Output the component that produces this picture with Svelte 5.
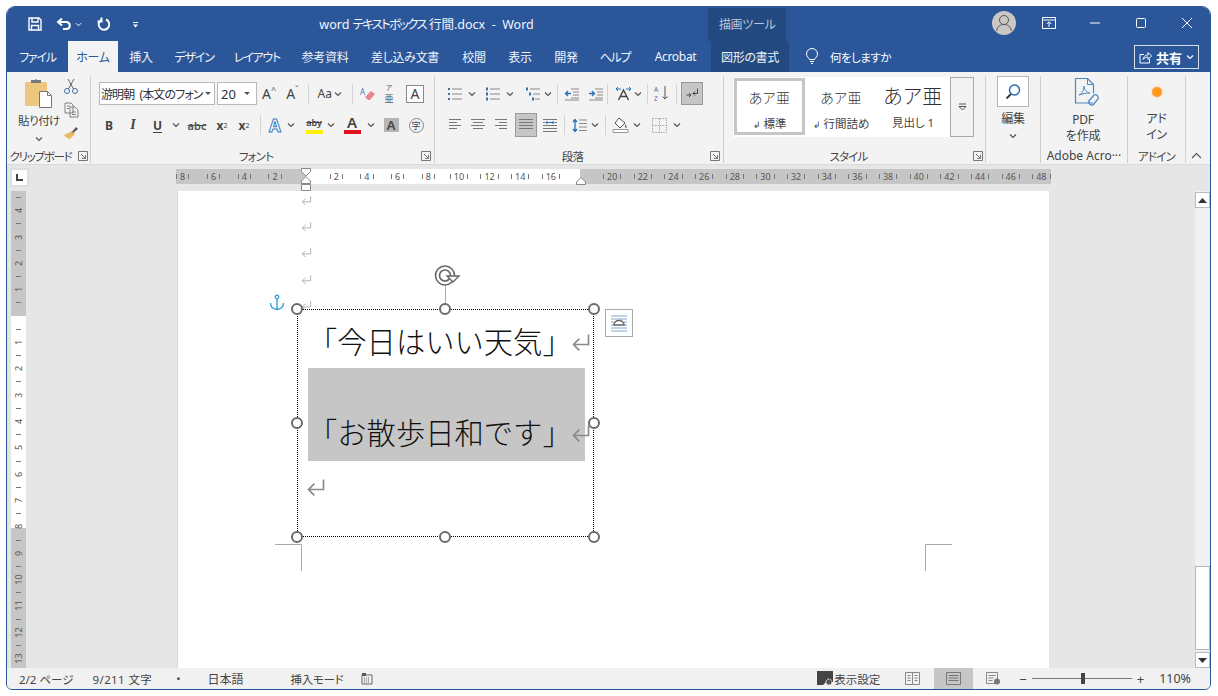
<script>
	const tabs = [
		{ label: 'ファイル', w: 61, kana: true },
		{ label: 'ホーム', w: 50, active: true },
		{ label: '挿入', w: 46 },
		{ label: 'デザイン', w: 60, kana: true },
		{ label: 'レイアウト', w: 66, kana: true },
		{ label: '参考資料', w: 70 },
		{ label: '差し込み文書', w: 90 },
		{ label: '校閲', w: 48 },
		{ label: '表示', w: 44 },
		{ label: '開発', w: 48 },
		{ label: 'ヘルプ', w: 50, kana: true },
		{ label: 'Acrobat', w: 71 }
	];

	const rulerCells = [];
	for (let n = -8; n <= 48; n += 2) {
		rulerCells.push(n === 0 || n === 18 ? '' : String(Math.abs(n)));
	}

	const vCells = [];
	for (let i = -9; i <= 27; i++) {
		if (i === 0) vCells.push({ kind: 'blank' });
		else if (i % 2 === 0) vCells.push({ kind: 'num', text: String(Math.abs(i / 2)) });
		else vCells.push({ kind: 'tick' });
	}

	const paragraphMarks = [0, 1, 2, 3, 4];
</script>

{#snippet chev()}
	<span class="cell w12">
		<svg width="8" height="6" viewBox="0 0 8 6"><path d="M1 1.5 4 4.5 7 1.5" fill="none" stroke="#555" stroke-width="1.2" /></svg>
	</span>
{/snippet}

{#snippet launcher()}
	<svg class="launcher" width="10" height="10" viewBox="0 0 10 10">
		<path d="M.5 9.5V.5h9v9z M3 3l4.5 4.5 M4 7.5h3.5V4" fill="none" stroke="#777" />
	</svg>
{/snippet}

{#snippet mark(big)}
	<svg class={big ? 'mark big' : 'mark'} viewBox="0 0 12 12">
		<path d="M10.5 1.5V7.5H1.5 M5 4 1.5 7.5 5 11" fill="none" stroke="currentColor" stroke-width="1" />
	</svg>
{/snippet}

{#snippet lines(a, b, c, d)}
	<svg width="16" height="14" viewBox="0 0 16 14">
		<path d="M{a} 1.5H{b} M{c} 4.5H{d} M{a} 7.5H{b} M{c} 10.5H{d}" stroke="#777" fill="none" />
	</svg>
{/snippet}

<div class="window">
	<header class="titlebar">
		<div class="qat">
			<span class="q q-save">
				<svg width="14" height="14" viewBox="0 0 14 14"><path d="M1 1h10l2 2v10H1z M4 1v4h6V1 M3.500 13V8.500h7V13" fill="none" stroke="#fff" stroke-width="1.400" /></svg>
			</span>
			<span class="q q-undo">
				<svg width="16" height="14" viewBox="0 0 16 14"><path d="M6 1.500 2 5l4 3.500 M2.500 5H10c5 0 5 7 0 7H7" fill="none" stroke="#fff" stroke-width="2" /></svg>
			</span>
			<span class="q q-chev">
				<svg width="7" height="5" viewBox="0 0 8 6"><path d="M1 1.500 4 4.500 7 1.500" fill="none" stroke="#fff" stroke-width="1.200" /></svg>
			</span>
			<span class="q q-redo">
				<svg width="14" height="15" viewBox="0 0 14 15"><path d="M9 2.500A5.300 5.300 0 1 1 4 3 M4.500 .5V4.500H.5" fill="none" stroke="#fff" stroke-width="2" /></svg>
			</span>
			<span class="q q-custom">
				<svg width="7" height="7" viewBox="0 0 7 7"><path d="M1 1.500h5" stroke="#fff" /><path d="M1 3.500h5L3.500 6.500z" fill="#fff" /></svg>
			</span>
		</div>
		<div class="doc-title">word <span class="title-kana">テキストボックス</span> 行間.docx&nbsp; - &nbsp;Word</div>
		<div class="context-head">描画ツール</div>
		<div class="window-controls">
			<span class="avatar">
				<svg width="24" height="24" viewBox="0 0 24 24"><circle cx="12" cy="9" r="4.500" fill="none" stroke="#555" /><path d="M4.500 20c1-5 4-6.500 7.500-6.500s6.500 1.500 7.500 6.500" fill="none" stroke="#555" /></svg>
			</span>
			<span class="ctl first">
				<svg width="14" height="12" viewBox="0 0 14 12"><path d="M.5 .5h13v11H.5z M.5 3h13" fill="none" stroke="#fff" /><path d="M7 10V5 M4.800 7 7 4.800 9.200 7" fill="none" stroke="#fff" /></svg>
			</span>
			<span class="ctl"><svg width="12" height="12" viewBox="0 0 12 12"><path d="M1 6h10" stroke="#fff" /></svg></span>
			<span class="ctl"><svg width="12" height="12" viewBox="0 0 12 12"><rect x="1.500" y="1.500" width="9" height="9" rx="1" fill="none" stroke="#fff" /></svg></span>
			<span class="ctl"><svg width="12" height="12" viewBox="0 0 12 12"><path d="M1 1l10 10M11 1 1 11" stroke="#fff" /></svg></span>
		</div>
	</header>

	<nav class="tabbar">
		<div class="tabs">
			{#each tabs as t}
				<span class="tab" class:active={t.active} class:kana={t.kana} style="width: {t.w}px">{t.label}</span>
			{/each}
			<span class="tab context-tab">図形の書式</span>
			<span class="tell">
				<svg width="14" height="17" viewBox="0 0 14 17"><path d="M4.500 11.500C3.500 9.500 1.500 8.500 1.500 6a5.500 5.500 0 0 1 11 0c0 2.500-2 3.500-3 5.500z M5 13.500h4 M6 15.500h2" fill="none" stroke="#fff" /></svg>
				<span>何をしますか</span>
			</span>
		</div>
		<span class="share">
			<svg width="13" height="13" viewBox="0 0 13 13"><path d="M5 3.500H1v8.500h9.500V8 M4 8.500C4.500 5 7 4 9 4V1.500L12.500 5 9 8.500V6C7 6 5 7 4 8.500z" fill="none" stroke="#fff" /></svg>
			<b>共有</b>
			<svg width="8" height="6" viewBox="0 0 8 6"><path d="M1 1.500 4 4.500 7 1.500" fill="none" stroke="#fff" stroke-width="1.100" /></svg>
		</span>
	</nav>

	<section class="ribbon">
		<div class="group g-clip">
			<div class="body clip-body">
				<div class="paste">
					<svg width="32" height="32" viewBox="0 0 32 32">
						<rect x="2" y="5" width="22" height="24" rx="1" fill="#eec77f" />
						<path d="M8 6V3h3.500a2 2 0 0 1 3 0H18v3z" fill="#777" />
						<path d="M16.500 14.500h8l4 4v12h-12z" fill="#fff" stroke="#777" />
						<path d="M24.500 14.500v4h4" fill="none" stroke="#777" />
					</svg>
					<span class="paste-label">貼り付け</span>
					<svg width="8" height="6" viewBox="0 0 8 6"><path d="M1 1.500 4 4.500 7 1.500" fill="none" stroke="#555" stroke-width="1.200" /></svg>
				</div>
				<div class="clip-tools">
					<svg width="16" height="17" viewBox="0 0 16 17"><path d="M5 1l5.500 10 M11 1 5.500 11" stroke="#666" fill="none" /><circle cx="4" cy="13" r="2.500" fill="none" stroke="#3c6ea5" /><circle cx="12" cy="13" r="2.500" fill="none" stroke="#3c6ea5" /></svg>
					<svg width="15" height="16" viewBox="0 0 15 16"><path d="M1 1h6l2 2v8H1z M6 5h5l3 3v7H6z M3 4h3M3 6.500h2M8 10h4M8 12.500h4" fill="#f3f3f3" stroke="#777" stroke-width=".9" /></svg>
					<svg width="16" height="15" viewBox="0 0 16 15"><path d="M9 6l3 3-5 5c-2-.5-5-2-6-4z" fill="#e7b865" /><path d="M9 7l4-5 2 2-5 4z" fill="#555" /></svg>
				</div>
			</div>
			<div class="group-label clip-label"><span>クリップボード</span>{@render launcher()}</div>
		</div>

		<div class="group g-font">
			<div class="body">
				<div class="row row1 font-r1">
					<span class="combo font-name">游明朝 (本文のフォン<i class="tri"></i></span>
					<span class="combo font-size">20<i class="tri"></i></span>
					<span class="cell w24 ch">A<sup>^</sup></span>
					<span class="cell w23 ch">A<sup>ˇ</sup></span>
					<span class="sep"></span>
					<span class="cell w35 case"><span class="aa">Aa</span><svg width="8" height="6" viewBox="0 0 8 6"><path d="M1 1.500 4 4.500 7 1.500" fill="none" stroke="#555" stroke-width="1.200" /></svg></span>
					<span class="sep"></span>
					<span class="cell w20">
						<svg width="17" height="16" viewBox="0 0 17 16"><path d="M9 14l-3-3 6-6 4 3-5 6z" fill="#e8848f" /><text x="1" y="9" font-size="8" fill="#4a7ab5" font-family="Noto Sans">A</text></svg>
					</span>
					<span class="cell w24 ruby"><small>ア</small><span>亜</span></span>
					<span class="cell w18 ml5 boxed">A</span>
				</div>
				<div class="row row2 font-r2">
					<span class="cell w24 tb"><b>B</b></span>
					<span class="cell w24 tb italic">I</span>
					<span class="cell w25 tb under"><b>U</b></span>
					{@render chev()}
					<span class="cell w30 tb strike">abc</span>
					<span class="cell w20 tb"><b>x</b><sub>2</sub></span>
					<span class="cell w24 tb"><b>x</b><sup class="pow">2</sup></span>
					<span class="sep"></span>
					<span class="cell w20 effect">A</span>
					{@render chev()}
					<span class="cell w22 ml6 colored"><span class="hl">aby</span><i class="bar yellow"></i></span>
					{@render chev()}
					<span class="cell w20 ml5 colored"><span class="fc">A</span><i class="bar red"></i></span>
					<span class="cell w12 ml3"><svg width="8" height="6" viewBox="0 0 8 6"><path d="M1 1.500 4 4.500 7 1.500" fill="none" stroke="#555" stroke-width="1.200" /></svg></span>
					<span class="cell w20 ml4 shaded"><span>A</span></span>
					<span class="cell w20 ml5"><span class="enclosed">字</span></span>
				</div>
			</div>
			<div class="group-label"><span>フォント</span>{@render launcher()}</div>
		</div>

		<div class="group g-para">
			<div class="body">
				<div class="row row1 para-r1">
					<span class="cell w20 ml10">
						<svg width="16" height="14" viewBox="0 0 16 14"><path d="M5 2h10M5 7h10M5 12h10" stroke="#888" /><path d="M1 1h2v2H1zM1 6h2v2H1zM1 11h2v2H1z" fill="#3c6ea5" /></svg>
					</span>
					<span class="cell w12 ml1"><svg width="8" height="6" viewBox="0 0 8 6"><path d="M1 1.500 4 4.500 7 1.500" fill="none" stroke="#555" stroke-width="1.200" /></svg></span>
					<span class="cell w20 ml5">
						<svg width="16" height="14" viewBox="0 0 16 14"><path d="M5 2h10M5 7h10M5 12h10" stroke="#888" /><path d="M1 .5h2v3H1zM1 5.500h2v3H1zM1 10.500h2v3H1z" fill="#3c6ea5" /></svg>
					</span>
					<span class="cell w12 ml1"><svg width="8" height="6" viewBox="0 0 8 6"><path d="M1 1.500 4 4.500 7 1.500" fill="none" stroke="#555" stroke-width="1.200" /></svg></span>
					<span class="cell w18 ml8">
						<svg width="16" height="14" viewBox="0 0 16 14"><path d="M5 2h10M8 7h7M10 12h5" stroke="#888" /><path d="M1 .5h2v3H1zM4 5.500h2v3H4zM7 10.500h2v3H7z" fill="#3c6ea5" /></svg>
					</span>
					{@render chev()}
					<span class="sep ml3"></span>
					<span class="cell w20">
						<svg width="16" height="14" viewBox="0 0 16 14"><path d="M7 2h8M9 5h6M9 8h6M7 11h8M1 13h14" stroke="#888" /><path d="M7 6.500H1.500 M4 4 1.500 6.500 4 9" stroke="#2a6fb5" fill="none" stroke-width="1.300" /></svg>
					</span>
					<span class="cell w20 ml4">
						<svg width="16" height="14" viewBox="0 0 16 14"><path d="M7 2h8M9 5h6M9 8h6M7 11h8M1 13h14" stroke="#888" /><path d="M1 6.500H6.500 M4 4 6.500 6.500 4 9" stroke="#2a6fb5" fill="none" stroke-width="1.300" /></svg>
					</span>
					<span class="sep ml1"></span>
					<span class="cell w18 ml2">
						<svg width="17" height="15" viewBox="0 0 17 15"><path d="M3.500 14 8.500 4l5 10 M5.500 10.500h6" stroke="#444" fill="none" stroke-width="1.400" /><path d="M1 3h5M3 1 1 3l2 2 M16 3h-5M14 1l2 2-2 2" stroke="#2a6fb5" fill="none" /></svg>
					</span>
					{@render chev()}
					<span class="sep ml3"></span>
					<span class="cell w20">
						<svg width="16" height="17" viewBox="0 0 16 17"><text x="0" y="7" font-size="6.500" fill="#3c6ea5" font-family="Noto Sans">A</text><text x="0" y="16" font-size="6.500" fill="#8a5fb0" font-family="Noto Sans">Z</text><path d="M11 1v13M8.500 11.500 11 14l2.500-2.500" stroke="#555" fill="none" /></svg>
					</span>
					<span class="sep"></span>
					<span class="cell w22 pressed">
						<svg width="15" height="13" viewBox="0 0 15 13"><path d="M12.500 1.500v5H8 M10 4.500 8 6.500l2 2 M1.500 8h4 M4 6 6 8 4 10" stroke="#444" fill="none" /></svg>
					</span>
				</div>
				<div class="row row2 para-r2">
					<span class="cell w20 ml9">{@render lines(3, 15, 3, 11)}</span>
					<span class="cell w20 ml4">{@render lines(1, 15, 3, 13)}</span>
					<span class="cell w20 ml4">{@render lines(1, 13, 5, 13)}</span>
					<span class="cell w22 ml3 pressed">{@render lines(1, 15, 1, 15)}</span>
					<span class="cell w20 ml3">
						<svg width="16" height="15" viewBox="0 0 16 15"><path d="M1 1.500h14M1 4.500h2M13 4.500h2M1 7.500h14M1 10.500h14M1 13.500h14" stroke="#777" /><path d="M4 4.500h8M5.500 3 4 4.500 5.500 6M10.500 3 12 4.500 10.500 6" stroke="#2a6fb5" fill="none" /></svg>
					</span>
					<span class="sep"></span>
					<span class="cell w19 ml1">
						<svg width="15" height="15" viewBox="0 0 15 15"><path d="M3 2v11M1 4l2-2.500L5 4M1 11l2 2.500L5 11" stroke="#2a6fb5" fill="none" stroke-width="1.300" /><path d="M7 2h8M7 5.500h8M7 9h8M7 12.500h8" stroke="#888" /></svg>
					</span>
					{@render chev()}
					<span class="sep ml4"></span>
					<span class="cell w20">
						<svg width="17" height="16" viewBox="0 0 17 16"><path d="M7 1l6 5-5 5-5-5z" fill="#fff" stroke="#555" /><path d="M13 7c2 2 2 4 1 4s-1-2-1-4z" fill="#2a6fb5" /><path d="M1 12.500h15v3H1z" fill="#fff" stroke="#999" /></svg>
					</span>
					<span class="cell w12 ml1"><svg width="8" height="6" viewBox="0 0 8 6"><path d="M1 1.500 4 4.500 7 1.500" fill="none" stroke="#555" stroke-width="1.200" /></svg></span>
					<span class="cell w20 ml6">
						<svg width="15" height="15" viewBox="0 0 15 15"><path d="M.5 .5h14v14H.5z M7.500 .5v14 M.5 7.500h14" fill="none" stroke="#aaa" stroke-dasharray="1.500 1" /></svg>
					</span>
					<span class="cell w12 ml2"><svg width="8" height="6" viewBox="0 0 8 6"><path d="M1 1.500 4 4.500 7 1.500" fill="none" stroke="#555" stroke-width="1.200" /></svg></span>
				</div>
			</div>
			<div class="group-label"><span>段落</span>{@render launcher()}</div>
		</div>

		<div class="group g-style">
			<div class="body">
				<div class="gallery">
					<div class="style current"><span class="sample">あア亜</span><span class="sname"><i>↲</i> 標準</span></div>
					<div class="style"><span class="sample">あア亜</span><span class="sname"><i>↲</i> 行間詰め</span></div>
					<div class="style"><span class="sample large">あア亜</span><span class="sname">見出し 1</span></div>
					<div class="gallery-more">
						<svg width="9" height="8" viewBox="0 0 9 8"><path d="M1 1h7" stroke="#555" /><path d="M1 3.500h7L4.500 7z" fill="none" stroke="#555" /></svg>
					</div>
				</div>
			</div>
			<div class="group-label"><span>スタイル</span>{@render launcher()}</div>
		</div>

		<div class="group g-edit">
			<div class="big-col">
				<span class="find">
					<svg width="18" height="18" viewBox="0 0 18 18"><circle cx="10.500" cy="7" r="5" fill="none" stroke="#2a6fb5" stroke-width="1.500" /><path d="M7 11 2.500 15.500" stroke="#333" stroke-width="1.800" /></svg>
				</span>
				<span class="big-text edit-text">編集</span>
				<svg width="8" height="6" viewBox="0 0 8 6"><path d="M1 1.500 4 4.500 7 1.500" fill="none" stroke="#555" stroke-width="1.200" /></svg>
			</div>
		</div>

		<div class="group g-pdf">
			<div class="big-col">
				<svg class="pdf-icon" width="28" height="31" viewBox="0 0 28 31">
					<path d="M2.500 1.500h12l6 6v9 M20 26H2.500V1.500" fill="none" stroke="#4a86c5" stroke-width="1.200" />
					<path d="M14.500 1.500v6h6" fill="none" stroke="#4a86c5" />
					<path d="M6 18c3-1 5-5 5-9 0 3 2 6 6 7-3 0-7 .5-11 2z" fill="none" stroke="#4a86c5" />
					<path d="M15 25l6-7a3 3 0 0 1 4 4l-5 6a3 3 0 0 1-4-3" fill="none" stroke="#4a86c5" stroke-width="1.300" />
				</svg>
				<span class="big-text pdf-text">PDF<br />を作成</span>
			</div>
			<div class="group-label wide acro"><span>Adobe Acro···</span></div>
		</div>

		<div class="group g-addin">
			<div class="big-col">
				<span class="dot"></span>
				<span class="big-text addin-text">アド<br />イン</span>
			</div>
			<div class="group-label wide"><span>アドイン</span></div>
		</div>

		<div class="collapse">
			<svg width="11" height="7" viewBox="0 0 11 7"><path d="M1 6 5.500 1.500 10 6" fill="none" stroke="#555" stroke-width="1.100" /></svg>
		</div>
	</section>

	<section class="workspace">
		<div class="ruler-row">
			<span class="tabstop"><svg width="9" height="9" viewBox="0 0 9 9"><path d="M2 1v6h6" fill="none" stroke="#444" stroke-width="2" /></svg></span>
			<div class="hruler">
				<div class="hcells">
					{#each rulerCells as text}
						<span class="hcell">
							{#if text}<i class="tick"></i><span>{text}</span><i class="tick"></i>{/if}
						</span>
					{/each}
				</div>
				<svg class="indent first-line" width="10" height="9" viewBox="0 0 10 9"><path d="M.5 .5h9v3L5 8 .5 3.500z" fill="#fff" stroke="#888" /></svg>
				<svg class="indent hanging" width="10" height="8" viewBox="0 0 10 8"><path d="M5 .5 9.500 5v2.500h-9V5z" fill="#fff" stroke="#888" /></svg>
				<svg class="indent left-box" width="10" height="7" viewBox="0 0 10 7"><path d="M.5 .5h9v6h-9z" fill="#fff" stroke="#888" /></svg>
				<svg class="indent right-ind" width="10" height="8" viewBox="0 0 10 8"><path d="M5 .5 9.500 5v2.500h-9V5z" fill="#fff" stroke="#888" /></svg>
			</div>
		</div>

		<div class="doc-area">
			<div class="left-pane">
				<div class="vruler">
					{#each vCells as c}
						<span class="vcell">
							{#if c.kind === 'num'}<span class="vnum">{c.text}</span>{:else if c.kind === 'tick'}<i class="vtick"></i>{/if}
						</span>
					{/each}
				</div>
			</div>

			<div class="page">
				<div class="para-marks">
					{#each paragraphMarks as p (p)}
						<div class="para-line">{@render mark(false)}</div>
					{/each}
				</div>

				<svg class="crop crop-l" width="27" height="27" viewBox="0 0 27 27"><path d="M0 .5h26.500V27" fill="none" stroke="#aaa" /></svg>
				<svg class="crop crop-r" width="27" height="27" viewBox="0 0 27 27"><path d="M27 .5H.5V27" fill="none" stroke="#aaa" /></svg>

				<svg class="anchor" width="16" height="17" viewBox="0 0 16 17"><circle cx="8" cy="3" r="1.800" fill="none" stroke="#2e9bd6" stroke-width="1.200" /><path d="M8 5v10.500 M1.500 9c0 4 3 6 6.500 6.500 3.500-.5 6.500-2.500 6.500-6.500" fill="none" stroke="#2e9bd6" stroke-width="1.300" /></svg>

				<div class="rotate-stem"></div>
				<svg class="rotate" width="27" height="24" viewBox="0 0 27 24">
					<circle cx="11" cy="11.500" r="9.500" fill="none" stroke="#666" stroke-width="1.600" />
					<circle cx="11" cy="11.500" r="5.500" fill="none" stroke="#666" stroke-width="1.600" />
					<path d="M13 12h12l-6 6z" fill="#fff" stroke="#666" stroke-width="1.400" />
				</svg>

				<div class="shape">
					<div class="shape-line">「今日はいい天気」{@render mark(true)}</div>
					<div class="selected">
						<div class="shape-line">「お散歩日和です」{@render mark(true)}</div>
					</div>
					<div class="last-line">{@render mark(true)}</div>
					<i class="h tl"></i><i class="h tc"></i><i class="h tr"></i>
					<i class="h ml"></i><i class="h mr"></i>
					<i class="h bl"></i><i class="h bc"></i><i class="h br"></i>
				</div>

				<span class="layout-options">
					<svg width="20" height="20" viewBox="0 0 20 20">
						<path d="M2 3h16M2 6h16M2 15h16M2 18h16M2 9h3M15 9h3M2 12h3M15 12h3" stroke="#7fa6cc" />
						<path d="M5 12c0-6 10-6 10 0z" fill="#fff" stroke="#666" stroke-width="1.500" />
					</svg>
				</span>
			</div>

			<div class="right-pane"></div>

			<div class="scrollbar">
				<span class="sb-btn"><svg width="9" height="5" viewBox="0 0 9 5"><path d="M4.500 0 9 5H0z" fill="#333" /></svg></span>
				<span class="sb-track"><span class="sb-thumb"></span></span>
				<span class="sb-btn"><svg width="9" height="5" viewBox="0 0 9 5"><path d="M0 0h9L4.500 5z" fill="#333" /></svg></span>
			</div>
		</div>
	</section>

	<footer class="statusbar">
		<span class="st page-count">2/2 ページ</span>
		<span class="st words">9/211 文字</span>
		<span class="st bullet">•</span>
		<span class="st lang">日本語</span>
		<span class="st mode">挿入モード</span>
		<svg class="macro" width="12" height="13" viewBox="0 0 12 13"><path d="M1 3h10v9H1z" fill="none" stroke="#666" /><path d="M1 1h4v3H1z" fill="#555" /><path d="M3 6h6M3 8h6M3 10h6" stroke="#666" stroke-dasharray="1 1" /></svg>
		<div class="st-right">
			<span class="display">
				<svg width="17" height="15" viewBox="0 0 17 15"><path d="M0 0h16v11H9l-3 3H0z" fill="#444" /><circle cx="12" cy="11" r="3" fill="#555" stroke="#f1f1f1" stroke-dasharray="2 1" /></svg>
				表示設定
			</span>
			<svg class="view-read" width="15" height="13" viewBox="0 0 15 13"><path d="M.5 .5h14v12H.5z M7.500 .5v12 M2.500 3.500h3M2.500 6h3M2.500 8.500h3M9.500 3.500h3M9.500 6h3M9.500 8.500h3" fill="none" stroke="#888" /></svg>
			<span class="view-print"><svg width="15" height="13" viewBox="0 0 15 13"><path d="M.5 .5h14v12H.5z M2.500 3.500h10M2.500 6h10M2.500 8.500h10" fill="none" stroke="#777" /></svg></span>
			<svg class="view-web" width="15" height="13" viewBox="0 0 15 13"><path d="M.5 .5h11v11H.5z M2.500 3.500h7M2.500 6h5M2.500 8.500h4" fill="none" stroke="#888" /><circle cx="11" cy="9.500" r="3" fill="#777" /></svg>
			<span class="zoom-minus">−</span>
			<span class="slider"><i class="slider-thumb"></i></span>
			<span class="zoom-plus">+</span>
			<span class="zoom-val">110%</span>
		</div>
	</footer>
</div>

<style>
	:global(body) {
		margin: 0;
		background: #fff;
	}

	.window {
		box-sizing: border-box;
		width: 1205px;
		height: 684px;
		margin: 6px 0 0 6px;
		border: 1px solid #2b579a;
		border-radius: 9px 9px 6px 6px;
		overflow: hidden;
		display: flex;
		flex-direction: column;
		font-family: "Noto Sans", "Noto Sans CJK JP", sans-serif;
		font-feature-settings: "palt";
		color: #444;
		background: #f3f3f3;
	}

	i {
		font-style: normal;
	}

	/* title bar */
	.titlebar {
		height: 34px;
		flex: none;
		display: flex;
		background: #2b579a;
		color: #fff;
	}

	.qat {
		width: 137px;
		display: flex;
		align-items: center;
	}

	.q {
		display: flex;
		align-items: center;
	}

	.q-save { margin-left: 21px; }
	.q-undo { margin-left: 14px; }
	.q-chev { margin-left: 3px; }
	.q-redo { margin-left: 15px; }
	.q-custom { margin-left: 21px; }

	.doc-title {
		width: 567px;
		line-height: 36px;
		font-size: 12.500px;
		padding-left: 176px;
		box-sizing: border-box;
		white-space: nowrap;
		color: #f2f5fa;
	}

	.title-kana {
		letter-spacing: -1.800px;
	}

	.context-head {
		width: 78px;
		margin-top: 1px;
		background: #234a80;
		color: #b9c7dc;
		font-size: 12px;
		line-height: 33px;
		text-align: center;
		letter-spacing: -0.3px;
	}

	.window-controls {
		flex: 1;
		display: flex;
		align-items: center;
		padding-left: 206px;
		padding-bottom: 2px;
	}

	.avatar {
		width: 24px;
		height: 24px;
		border-radius: 50%;
		background: #c9c6c3;
		display: block;
	}

	.avatar svg {
		display: block;
	}

	.ctl {
		width: 46px;
		display: flex;
		justify-content: center;
	}

	.ctl.first {
		margin-left: 10px;
	}

	/* tabs */
	.tabbar {
		height: 31px;
		flex: none;
		display: flex;
		background: #2b579a;
		color: #fff;
		font-size: 12px;
	}

	.tabs {
		display: flex;
		flex: 1;
		align-items: stretch;
	}

	.tab {
		display: flex;
		align-items: center;
		justify-content: center;
		white-space: nowrap;
		color: #f0f4fa;
		box-sizing: border-box;
		letter-spacing: -0.3px;
	}

	.tab.kana {
		letter-spacing: -1.2px;
	}

	.tab.active {
		background: #f3f3f3;
		color: #2b579a;
	}

	.context-tab {
		width: 78px;
		background: #234a80;
	}

	.tell {
		display: flex;
		align-items: center;
		gap: 11px;
		margin-left: 16px;
		font-size: 11.500px;
		letter-spacing: -0.5px;
	}

	.share {
		box-sizing: border-box;
		width: 65px;
		height: 24px;
		margin: 4px 11px 0 0;
		border: 1px solid #d5deeb;
		display: flex;
		align-items: center;
		justify-content: center;
		gap: 4px;
		font-size: 13px;
	}

	/* ribbon */
	.ribbon {
		height: 93px;
		flex: none;
		display: flex;
		align-items: flex-start;
		background: #f3f3f3;
		border-bottom: 1px solid #dadada;
		box-sizing: border-box;
		font-size: 12px;
	}

	.group {
		box-sizing: border-box;
		height: 87px;
		margin-top: 4px;
		border-right: 1px solid #cfcfcf;
		display: flex;
		flex-direction: column;
	}

	.g-clip { width: 84px; }
	.g-font { width: 344px; }
	.g-para { width: 289px; }
	.g-style { width: 262px; }
	.g-edit { width: 55px; }
	.g-pdf { width: 87px; }
	.g-addin { width: 58px; }

	.body {
		flex: 1;
		min-height: 0;
	}

	.group-label {
		height: 16px;
		flex: none;
		display: flex;
		align-items: center;
		font-size: 11.500px;
		white-space: nowrap;
		letter-spacing: -0.8px;
		padding-top: 1px;
		box-sizing: border-box;
	}

	.group-label span {
		flex: 1;
		text-align: center;
	}

	.group-label.wide {
		margin-top: auto;
	}

	.clip-label {
		letter-spacing: -1.300px;
	}

	.clip-label span {
		padding-right: 4px;
	}

	.acro {
		letter-spacing: 0;
		font-size: 12px;
		overflow: hidden;
	}

	.launcher {
		flex: none;
		margin: 0 2px 0 0;
	}

	.g-font .launcher,
	.g-para .launcher {
		margin-right: 3px;
	}

	.clip-body {
		display: flex;
	}

	.paste {
		width: 54px;
		display: flex;
		flex-direction: column;
		align-items: center;
		padding-left: 10px;
		box-sizing: border-box;
		padding-top: 1px;
	}

	.paste-label {
		margin: 3px 0 7px;
		font-size: 11.500px;
		letter-spacing: -0.5px;
		line-height: 17px;
		white-space: nowrap;
	}

	.clip-tools {
		width: 20px;
		display: flex;
		flex-direction: column;
		align-items: center;
		gap: 7px;
		padding-top: 2px;
	}

	.row {
		display: flex;
		align-items: center;
	}

	.row1 {
		height: 23px;
		margin-top: 6px;
	}

	.row2 {
		height: 24px;
		margin-top: 8px;
	}

	.font-r1 { padding-left: 8px; }
	.font-r2 { padding-left: 6px; }

	.cell {
		flex: none;
		height: 23px;
		display: flex;
		align-items: center;
		justify-content: center;
		gap: 3px;
		box-sizing: border-box;
	}

	.w12 { width: 12px; }
	.w18 { width: 18px; }
	.w19 { width: 19px; }
	.w20 { width: 20px; }
	.w22 { width: 22px; }
	.w23 { width: 23px; }
	.w24 { width: 24px; }
	.w25 { width: 25px; }
	.w30 { width: 30px; }
	.w35 { width: 35px; }
	.ml1 { margin-left: 1px; }
	.ml2 { margin-left: 2px; }
	.ml3 { margin-left: 3px; }
	.ml4 { margin-left: 4px; }
	.ml5 { margin-left: 5px; }
	.ml6 { margin-left: 6px; }
	.ml8 { margin-left: 8px; }
	.ml9 { margin-left: 9px; }
	.ml10 { margin-left: 10px; }

	.sep {
		flex: none;
		width: 1px;
		height: 20px;
		margin: 0 4px;
		background: #d4d4d4;
	}

	.sep.ml1 { margin-left: 1px; }
	.sep.ml3 { margin-left: 3px; }
	.sep.ml4 { margin-left: 4px; }

	.combo {
		box-sizing: border-box;
		height: 23px;
		background: #fff;
		border: 1px solid #b9b9b9;
		display: flex;
		align-items: center;
		font-size: 12px;
		white-space: pre;
		padding-left: 1px;
		position: relative;
		letter-spacing: -0.900px;
		word-spacing: 3px;
		flex: none;
		color: #333;
	}

	.font-name {
		width: 116px;
	}

	.font-size {
		width: 40px;
		margin-left: 2px;
		padding-left: 3px;
		font-size: 13px;
		letter-spacing: 0;
	}

	.tri {
		position: absolute;
		right: 3px;
		top: 9px;
		border: 3px solid transparent;
		border-top: 3px solid #555;
	}

	.font-size .tri {
		right: 6px;
	}

	.ch {
		font-size: 14px;
		gap: 0;
	}

	.ch sup {
		font-size: 9px;
		color: #555;
		line-height: 1;
		margin-bottom: 8px;
	}

	.case {
		justify-content: flex-end;
		padding-right: 6px;
		gap: 2px;
	}

	.aa {
		font-size: 12px;
	}

	.ruby {
		flex-direction: column;
		gap: 0;
		color: #555;
		font-size: 9px;
		line-height: normal;
	}

	.ruby small {
		font-size: 6.500px;
	}

	.boxed {
		height: 18px;
		border: 1px solid #888;
		background: #fdfdfd;
		font-size: 14px;
		color: #444;
	}

	.tb {
		font-size: 12px;
		color: #444;
		gap: 0;
	}

	.italic {
		font-family: "Liberation Serif", serif;
		font-style: italic;
		font-weight: 700;
		font-size: 14px;
	}

	.under b {
		text-decoration: underline;
		text-underline-offset: 2px;
	}

	.strike {
		text-decoration: line-through;
		font-size: 11px;
		font-weight: 600;
		color: #555;
	}

	.tb sub,
	.tb .pow {
		font-size: 7px;
		line-height: 1;
	}

	.effect {
		font-size: 17px;
		color: #fff;
		-webkit-text-stroke: 1px #3a7cc0;
		font-weight: 700;
	}

	.colored {
		flex-direction: column;
		gap: 0;
		line-height: 13px;
	}

	.hl {
		font-size: 9px;
		font-weight: 600;
		text-decoration: line-through;
	}

	.fc {
		font-size: 15px;
		font-weight: 600;
	}

	.bar {
		display: block;
		width: 17px;
		height: 4px;
		margin-top: 1px;
	}

	.yellow { background: #fff200; }
	.red { background: #e2101e; }

	.shaded span {
		display: block;
		width: 15px;
		line-height: 14px;
		text-align: center;
		background: #b5b5b5;
		font-size: 13px;
		font-weight: 600;
		color: #444;
	}

	.enclosed {
		box-sizing: border-box;
		width: 15px;
		height: 15px;
		border: 1px solid #888;
		border-radius: 50%;
		font-size: 9px;
		text-align: center;
		line-height: 13px;
	}

	.pressed {
		background: #c6c6c6;
		border: 1px solid #9a9a9a;
	}

	.para-r2 .pressed {
		height: 24px;
	}

	/* styles gallery */
	.gallery {
		display: flex;
		margin: 1px 0 0 9px;
		width: 241px;
		height: 60px;
		box-sizing: border-box;
		background: #fff;
		padding-top: 1px;
		padding-bottom: 2px;
	}

	.style {
		box-sizing: border-box;
		width: 72px;
		display: flex;
		flex-direction: column;
		align-items: center;
		padding-top: 7px;
	}

	.current {
		width: 71px;
		margin-left: 1px;
		border: 3px solid #c6c6c6;
		padding-top: 4px;
	}

	.sample {
		height: 26px;
		font-size: 14px;
		line-height: 26px;
		font-weight: 300;
		color: #333;
		letter-spacing: 0.4px;
		white-space: nowrap;
	}

	.large {
		font-size: 20px;
		margin-top: -1px;
	}

	.sname {
		font-size: 11.500px;
		margin-top: 4px;
		white-space: nowrap;
		letter-spacing: -0.1px;
	}

	.sname i {
		font-size: 9px;
	}

	.gallery-more {
		box-sizing: border-box;
		width: 24px;
		height: 60px;
		margin-top: -1px;
		border: 1px solid #a9a9a9;
		background: #f3f3f3;
		margin-left: auto;
		display: flex;
		align-items: center;
		justify-content: center;
	}

	/* big buttons */
	.big-col {
		display: flex;
		flex-direction: column;
		align-items: center;
	}

	.find {
		box-sizing: border-box;
		width: 32px;
		height: 31px;
		border: 1px solid #b5b5b5;
		background: #fff;
		display: flex;
		align-items: center;
		justify-content: center;
	}

	.big-text {
		font-size: 12px;
		line-height: 16px;
		text-align: center;
		letter-spacing: -0.2px;
	}

	.edit-text {
		margin: 4px 0 6px;
	}

	.pdf-icon {
		margin: 1px 0 4px 6px;
		display: block;
	}

	.pdf-text {
		margin-right: 2px;
	}

	.dot {
		width: 10px;
		height: 10px;
		margin: 11px 0 14px;
		border-radius: 50%;
		background: #ff9a1f;
		box-shadow: 0 0 3px #ffc580;
	}

	.collapse {
		flex: 1;
		height: 87px;
		margin-top: 4px;
		display: flex;
		align-items: flex-end;
		justify-content: center;
		padding-bottom: 4px;
		box-sizing: border-box;
		padding-right: 4px;
	}

	/* rulers and document */
	.workspace {
		flex: 1;
		min-height: 0;
		display: flex;
		flex-direction: column;
		background: #e6e6e6;
	}

	.ruler-row {
		height: 26px;
		flex: none;
		display: flex;
		align-items: flex-start;
	}

	.tabstop {
		box-sizing: border-box;
		width: 19px;
		height: 19px;
		margin: 3px 0 0 3px;
		background: #fff;
		border: 2px solid #dedede;
		display: flex;
		align-items: center;
		justify-content: center;
	}

	.hruler {
		position: relative;
		width: 875px;
		height: 15px;
		margin: 4px 0 0 147px;
		background: linear-gradient(90deg, #c6c6c6 130px, #fff 130px, #fff 404px, #c6c6c6 404px);
	}

	.hcells {
		display: flex;
		width: 875px;
		overflow: hidden;
		height: 15px;
		font-size: 9px;
		color: #555;
	}

	.hcell {
		flex: none;
		width: 30.670px;
		display: flex;
		align-items: center;
		justify-content: center;
		gap: 3px;
	}

	.hcell:first-child {
		width: 22.330px;
		padding-left: 0;
		justify-content: flex-start;
	}

	.tick {
		width: 1px;
		height: 5px;
		background: #777;
	}

	.indent {
		position: absolute;
		display: block;
	}

	.first-line { left: 125px; top: -1px; }
	.hanging { left: 125px; top: 7px; }
	.left-box { left: 125px; top: 15px; }
	.right-ind { left: 400px; top: 8px; }

	.doc-area {
		flex: 1;
		min-height: 0;
		display: flex;
	}

	.left-pane {
		width: 170px;
		flex: none;
	}

	.vruler {
		width: 15px;
		height: 477px;
		margin-left: 4px;
		overflow: hidden;
		background: linear-gradient(180deg, #c6c6c6 125px, #fff 125px, #fff 337px, #c6c6c6 337px);
		display: flex;
		flex-direction: column;
	}

	.vcell {
		flex: none;
		height: 13.175px;
		display: flex;
		align-items: center;
		justify-content: center;
	}

	.vnum {
		transform: rotate(-90deg);
		font-size: 9px;
		line-height: 9px;
		color: #555;
		white-space: nowrap;
	}

	.vtick {
		width: 5px;
		height: 1px;
		background: #777;
	}

	.page {
		position: relative;
		width: 872px;
		flex: none;
		background: #fff;
		overflow: hidden;
		box-shadow: inset 1px 0 0 #d8d8d8;
	}

	.para-marks {
		margin-top: -4px;
		padding-left: 124px;
		color: #aaa;
	}

	.para-line {
		height: 26.400px;
		display: flex;
		align-items: center;
	}

	.mark {
		display: block;
		width: 11px;
		height: 11px;
		flex: none;
	}

	.mark.big {
		width: 20px;
		height: 20px;
		color: #8a8a8a;
		margin-left: -1px;
	}

	.crop {
		position: absolute;
		top: 353px;
	}

	.crop-l { left: 98px; }
	.crop-r { left: 748px; }

	.anchor {
		position: absolute;
		left: 92px;
		top: 103px;
	}

	.rotate-stem {
		position: absolute;
		left: 268px;
		top: 95px;
		width: 1px;
		height: 24px;
		background: #aaa;
	}

	.rotate {
		position: absolute;
		left: 257px;
		top: 73px;
	}

	.shape {
		position: absolute;
		left: 120px;
		top: 118px;
		width: 297px;
		height: 228px;
		box-sizing: border-box;
		border: 1px dotted #000;
		padding: 8px 0 0 10px;
		font-size: 29.300px;
		font-weight: 300;
		color: #111;
	}

	.shape-line {
		height: 44px;
		margin-bottom: 6px;
		display: flex;
		align-items: center;
		white-space: nowrap;
		font-feature-settings: normal;
	}

	.shape-line .mark.big {
		margin-top: 4px;
	}

	.selected {
		width: 277px;
		height: 93px;
		background: #c6c6c6;
		display: flex;
		align-items: flex-end;
	}

	.selected .shape-line {
		height: 56px;
		margin-bottom: 2px;
	}

	.selected .shape-line .mark.big {
		margin-top: 4px;
	}

	.last-line {
		height: 52px;
		display: flex;
		align-items: center;
		margin-left: -1px;
		color: #8a8a8a;
	}

	.h {
		position: absolute;
		box-sizing: border-box;
		width: 12px;
		height: 12px;
		border: 2px solid #6b6b6b;
		border-radius: 50%;
		background: #fff;
	}

	.tl { left: -7px; top: -7px; }
	.tc { left: 141px; top: -7px; }
	.tr { left: 290px; top: -7px; }
	.ml { left: -7px; top: 107px; }
	.mr { left: 290px; top: 107px; }
	.bl { left: -7px; top: 221px; }
	.bc { left: 141px; top: 221px; }
	.br { left: 290px; top: 221px; }

	.layout-options {
		position: absolute;
		left: 428px;
		top: 118px;
		box-sizing: border-box;
		width: 28px;
		height: 28px;
		border: 1px solid #a9a9a9;
		background: #fff;
		display: flex;
		align-items: center;
		justify-content: center;
	}

	.right-pane {
		width: 146px;
		flex: none;
	}

	.scrollbar {
		flex: 1;
		display: flex;
		flex-direction: column;
		padding-top: 1px;
		background: #f1f1f1;
	}

	.sb-btn {
		box-sizing: border-box;
		height: 16px;
		flex: none;
		background: #fff;
		border: 1px solid #bbb;
		display: flex;
		align-items: center;
		justify-content: center;
	}

	.sb-track {
		flex: 1;
		display: flex;
		flex-direction: column;
		justify-content: flex-end;
		padding-bottom: 2px;
	}

	.sb-thumb {
		display: block;
		box-sizing: border-box;
		height: 84px;
		background: #fff;
		border: 1px solid #b5b5b5;
	}

	/* status bar */
	.statusbar {
		height: 21px;
		flex: none;
		display: flex;
		align-items: center;
		background: #f1f1f1;
		font-size: 11.500px;
		color: #444;
		white-space: nowrap;
	}

	.page-count { margin-left: 12px; }
	.words { margin-left: 19px; letter-spacing: 0.4px; }
	.bullet { margin-left: 24px; }
	.lang { margin-left: 27px; font-size: 12px; }
	.mode { margin-left: 47px; letter-spacing: -0.3px; }
	.macro { margin-left: 18px; }

	.st-right {
		display: flex;
		align-items: center;
		margin-left: auto;
		height: 100%;
		padding-right: 19px;
	}

	.display {
		display: flex;
		align-items: center;
		gap: 0;
		letter-spacing: 0;
	}

	.view-read {
		margin-left: 25px;
	}

	.view-print {
		width: 39px;
		height: 21px;
		margin-left: 14px;
		background: #c6c6c6;
		display: flex;
		align-items: center;
		justify-content: center;
	}

	.view-web {
		margin-left: 13px;
	}

	.zoom-minus {
		margin-left: 18px;
		font-size: 13px;
	}

	.slider {
		position: relative;
		width: 100px;
		height: 1px;
		margin-left: 5px;
		background: #777;
	}

	.slider-thumb {
		position: absolute;
		left: 49px;
		top: -5px;
		width: 4px;
		height: 11px;
		background: #444;
	}

	.zoom-plus {
		margin-left: 5px;
		font-size: 13px;
	}

	.zoom-val {
		margin-left: 15px;
		font-size: 12.500px;
	}
</style>
